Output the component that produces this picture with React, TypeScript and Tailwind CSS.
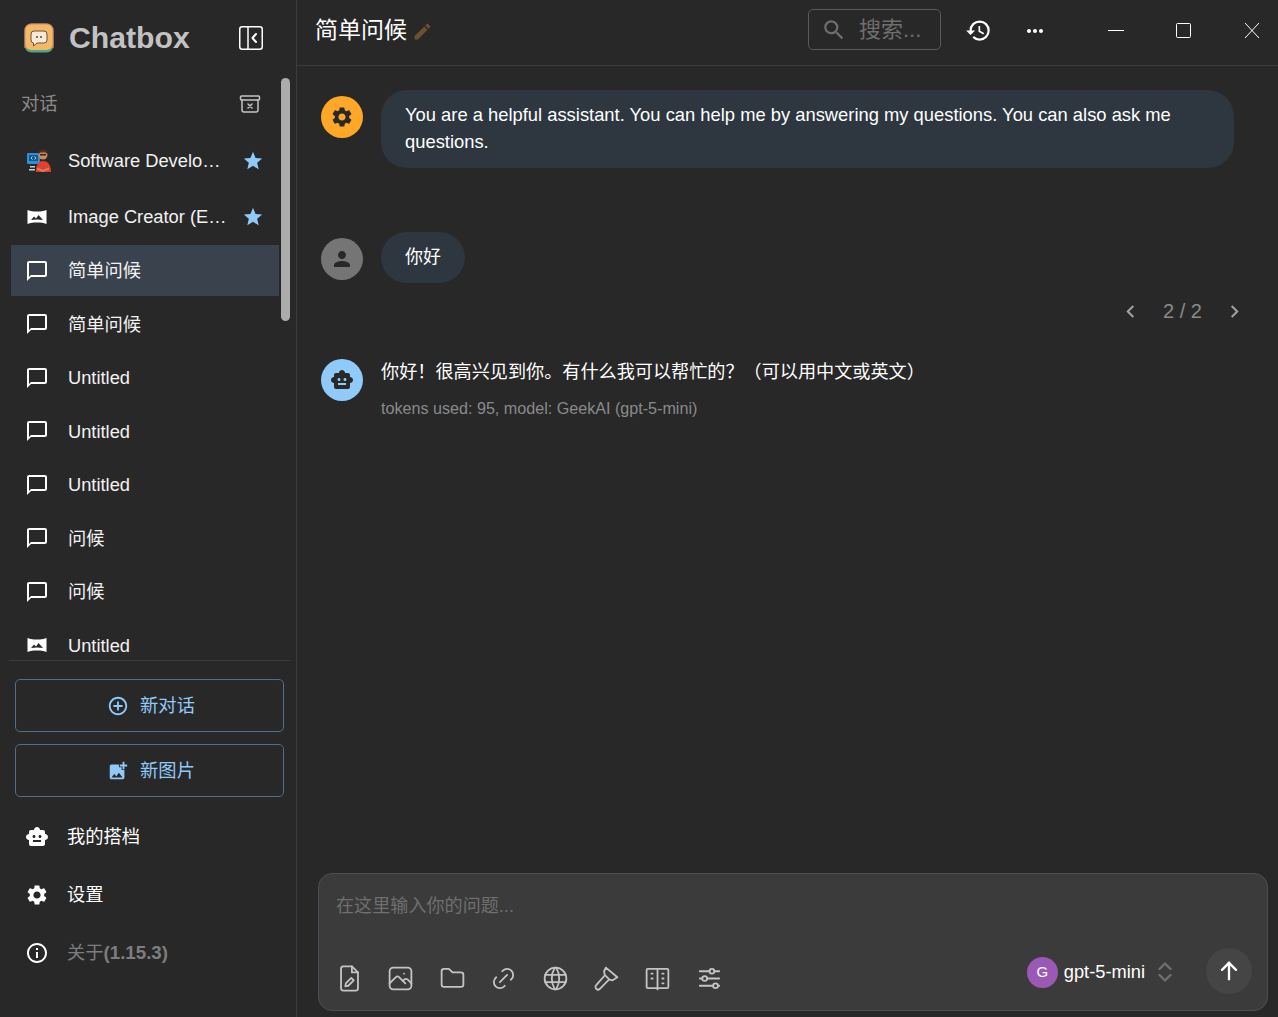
import {
  MdAddCircleOutline,
  MdAddPhotoAlternate,
  MdChatBubbleOutline,
  MdChevronLeft,
  MdChevronRight,
  MdEdit,
  MdHistory,
  MdInfoOutline,
  MdMoreHoriz,
  MdPerson,
  MdSearch,
  MdSettings,
  MdSmartToy,
  MdStar,
} from 'react-icons/md';
import { TbAdjustmentsHorizontal, TbArrowUp, TbFolder, TbLink, TbPhoto, TbWorld } from 'react-icons/tb';

const font = { fontFamily: '"Liberation Sans", "Noto Sans CJK SC", sans-serif' };

function Logo() {
  return (
    <svg viewBox="0 0 30 30" className="h-[30px] w-[30px]">
      <rect x="0.5" y="0.5" width="29" height="29" rx="7" fill="#4fa58f" />
      <path d="M7 0.5h16a6.5 6.5 0 0 1 6.5 6.5v18H0.5V7A6.5 6.5 0 0 1 7 0.5z" fill="#e2835f" />
      <rect x="1.5" y="1.5" width="27" height="25.5" rx="6" fill="#f4b967" />
      <path d="M10 8h10a3 3 0 0 1 3 3v6a3 3 0 0 1-3 3h-7l-3.5 3v-3a3 3 0 0 1-2.5-3v-6a3 3 0 0 1 3-3z" fill="#f7e9d7" stroke="#6b5240" strokeWidth="1" />
      <circle cx="13" cy="14" r="1" fill="#5a4636" />
      <circle cx="17" cy="14" r="1" fill="#5a4636" />
    </svg>
  );
}

function CollapseIcon() {
  return (
    <svg viewBox="0 0 24 24" className="h-[24px] w-[24px]" fill="none" stroke="#ffffff" strokeWidth="1.500" strokeLinecap="round" strokeLinejoin="round">
      <rect x="0.750" y="0.750" width="22.500" height="22.500" rx="2.500" />
      <path d="M9 0.750v22.500" />
      <path d="M17 8l-3.500 4 3.500 4" strokeWidth="2" />
    </svg>
  );
}

function DevAvatar() {
  return (
    <svg viewBox="0 0 26 26" className="h-[26px] w-[26px]">
      <rect x="1" y="5" width="13" height="11" rx="1" fill="#2f8fd6" />
      <rect x="3" y="7" width="9" height="6" fill="#155a8a" />
      <path d="M5 10l1.500-1.500M5 10l1.500 1.500M10 10l-1.500-1.500M10 10l-1.500 1.500" stroke="#cfe9fb" strokeWidth="0.8" />
      <rect x="4" y="18" width="5" height="1.500" fill="#cccccc" />
      <rect x="3" y="21" width="6" height="1.500" fill="#cccccc" />
      <circle cx="17" cy="7" r="4.500" fill="#c98a62" />
      <path d="M12.500 6c0-5 9-6 9 0l-2-1.500h-5z" fill="#5b2d1c" />
      <rect x="14" y="6" width="6" height="1.500" fill="#2a2a2a" />
      <path d="M10 24c0-8 3-11 7-11s8 3 8 11z" fill="#e2402f" />
      <path d="M11 19.500l6 2.500 6-2.500v2l-6 2.500-6-2.500z" fill="#c98a62" />
    </svg>
  );
}

function PanoramaIcon() {
  return (
    <svg viewBox="0 0 20 18" className="h-[18px] w-[20px]">
      <path
        d="M0.500 2c3 1.200 6 1.600 9.500 1.600S16.500 3.200 19.500 2v14c-3-1.200-6-1.600-9.500-1.600S3.500 14.800 0.500 16z"
        fill="#ffffff"
      />
      <path d="M4 12l3-3.500 2 2 2.500-3.500 4.500 5c-4-.8-8-.8-12 0z" fill="#282828" />
    </svg>
  );
}

function ClearIcon() {
  return (
    <svg viewBox="0 0 24 24" className="h-[24px] w-[24px]" fill="none" stroke="#c4c4c4" strokeWidth="1.500" strokeLinecap="round" strokeLinejoin="round">
      <rect x="2.500" y="4" width="19" height="4" rx="1" />
      <path d="M4 8v10a2 2 0 0 0 2 2h12a2 2 0 0 0 2-2V8" />
      <path d="M10 12l4 4M14 12l-4 4" />
    </svg>
  );
}

function BookIcon() {
  return (
    <svg viewBox="0 0 24 24" className="h-[29px] w-[29px]" fill="none" stroke="#c4c4c4" strokeWidth="1.500" strokeLinecap="round" strokeLinejoin="round">
      <path d="M12 20H4a1 1 0 0 1-1-1V5a1 1 0 0 1 1-1h16a1 1 0 0 1 1 1v14a1 1 0 0 1-1 1h-8zM12 4v17" />
      <path d="M7 8h1M7 12h1M16 8h1M16 12h1M16 16h1" />
    </svg>
  );
}

function FileEditIcon() {
  return (
    <svg viewBox="0 0 24 24" className="h-[29px] w-[29px]" fill="none" stroke="#c4c4c4" strokeWidth="1.500" strokeLinecap="round" strokeLinejoin="round">
      <path d="M14 2H7a2 2 0 0 0-2 2v16a2 2 0 0 0 2 2h10a2 2 0 0 0 2-2V7z" />
      <path d="M14 2v5h5" />
      <path d="M8.500 18.500l.5-2.500 4.500-4.500 2 2-4.500 4.500z" />
    </svg>
  );
}

function HammerIcon() {
  return (
    <svg viewBox="0 0 24 24" className="h-[29px] w-[29px]" fill="none" stroke="#c4c4c4" strokeWidth="1.500" strokeLinecap="round" strokeLinejoin="round">
      <path d="M11.500 3L21 11l-4 2.500-2.500-.5-4-4-.5-3z" />
      <path d="M10.500 9.500l-7 8a2 2 0 0 0 3 3l7.500-7.500" />
    </svg>
  );
}

function SelectorIcon() {
  return (
    <svg viewBox="0 0 14 24" className="h-[24px] w-[14px]" fill="none" stroke="#6f6f6f" strokeWidth="2.400" strokeLinecap="round" strokeLinejoin="round">
      <path d="M1.500 9L7 3.500 12.500 9" />
      <path d="M1.500 15L7 20.500 12.500 15" />
    </svg>
  );
}

type Session = { id: number; label: string; icon: 'chat' | 'image' | 'dev'; star?: boolean; active?: boolean; height: string };

const sessions: Session[] = [
  { id: 1, label: 'Software Developer', icon: 'dev', star: true, height: 'h-[58px]' },
  { id: 2, label: 'Image Creator (Example)', icon: 'image', star: true, height: 'h-[54px]' },
  { id: 3, label: '简单问候', icon: 'chat', active: true, height: 'h-[53.5px]' },
  { id: 4, label: '简单问候', icon: 'chat', height: 'h-[53.5px]' },
  { id: 5, label: 'Untitled', icon: 'chat', height: 'h-[53.5px]' },
  { id: 6, label: 'Untitled', icon: 'chat', height: 'h-[53.5px]' },
  { id: 7, label: 'Untitled', icon: 'chat', height: 'h-[53.5px]' },
  { id: 8, label: '问候', icon: 'chat', height: 'h-[53.5px]' },
  { id: 9, label: '问候', icon: 'chat', height: 'h-[53.5px]' },
  { id: 10, label: 'Untitled', icon: 'image', height: 'h-[53.5px]' },
];

function SessionRow({ s }: { s: Session }) {
  return (
    <div className={`flex items-center pl-[11px] pr-[11px] ${s.height}`}>
      <div className={`flex h-[51px] flex-1 items-center pl-[13px] ${s.active ? 'bg-[#39424d]' : ''}`}>
        <span className="flex w-[26px] items-center justify-center">
          {s.icon === 'chat' && <MdChatBubbleOutline className="text-[24px] text-white" />}
          {s.icon === 'image' && <PanoramaIcon />}
          {s.icon === 'dev' && (
            <span className="ml-[3px]">
              <DevAvatar />
            </span>
          )}
        </span>
        <span className="ml-[18px] w-[159px] truncate text-[18.3px] text-[#f2f2f2]">{s.label}</span>
        {s.star && <MdStar className="ml-[15px] shrink-0 text-[22px] text-[#90caf9]" />}
      </div>
    </div>
  );
}

function OutlineButton({ icon, label }: { icon: React.ReactNode; label: string }) {
  return (
    <button className="flex h-[53px] w-[269px] items-center justify-center gap-[11px] rounded-[5px] border border-[#4d6f8c] pl-[3px] text-[18.3px] text-[#90caf9]">
      {icon}
      <span>{label}</span>
    </button>
  );
}

function Sidebar() {
  return (
    <aside className="flex h-full w-[297px] shrink-0 flex-col border-r border-[#3c3c3c]">
      <div className="mb-[2px] flex h-[76px] shrink-0 items-center pl-[24px] pr-[33px]">
        <Logo />
        <span className="ml-[15px] flex-1 text-[30.2px] font-bold text-[#c2c2c2]">Chatbox</span>
        <CollapseIcon />
      </div>
      <div className="relative ml-[9px] mr-[6px] h-[583px] shrink-0 overflow-hidden border-b border-[#3c3c3c]">
        <div className="-ml-[9px]">
          <div className="flex h-[54px] items-center pb-[2px] pl-[21px] pr-[28px]">
            <span className="flex-1 text-[18.3px] text-[#8a8a8a]">对话</span>
            <ClearIcon />
          </div>
          {sessions.map((s) => (
            <SessionRow key={s.id} s={s} />
          ))}
        </div>
        <div className="absolute right-0 top-0 h-[243px] w-[9px] rounded-full bg-[#acacac]" />
      </div>
      <div className="flex flex-col gap-[12px] pl-[15px] pt-[18px]">
        <OutlineButton icon={<MdAddCircleOutline className="text-[22px]" />} label="新对话" />
        <OutlineButton icon={<MdAddPhotoAlternate className="text-[22px]" />} label="新图片" />
      </div>
      <div className="mt-[10px] flex flex-col pl-[25px] text-[18.3px]">
        <div className="flex h-[59px] items-center gap-[18px] text-white">
          <MdSmartToy className="text-[24px]" />
          <span>我的搭档</span>
        </div>
        <div className="flex h-[58px] items-center gap-[18px] text-white">
          <MdSettings className="text-[24px]" />
          <span>设置</span>
        </div>
        <div className="flex h-[58px] items-center gap-[18px] text-[#7d7d7d]">
          <MdInfoOutline className="text-[24px] text-white" />
          <span>
            关于<span className="text-[18.7px] font-bold">(1.15.3)</span>
          </span>
        </div>
      </div>
    </aside>
  );
}

function Header() {
  return (
    <header className="flex h-[66px] shrink-0 items-center border-b border-[#3c3c3c] pl-[18px]">
      <span className="-translate-y-[2px] text-[23px] leading-none text-white">简单问候</span>
      <MdEdit className="ml-[5px] -translate-y-[1px] text-[21px] text-[#6d5030]" />
      <div className="ml-auto flex h-[41px] w-[133px] -translate-y-[3px] items-center rounded-[5px] border border-[#5a5a5a] pl-[12px] text-[#6f6f6f]">
        <MdSearch className="text-[26px]" />
        <span className="ml-[12px] text-[22px]">搜索...</span>
      </div>
      <MdHistory className="ml-[24px] -translate-y-[2px] text-[27px] text-white" />
      <MdMoreHoriz className="ml-[31px] -translate-y-[2px] text-[24px] text-white" />
      <svg viewBox="0 0 153 20" className="ml-[61px] mr-[17px] h-[20px] w-[153px] -translate-y-[3px]" fill="none" stroke="#ffffff" strokeWidth="1">
        <path d="M0 10.500h16" />
        <rect x="68.500" y="3.500" width="14" height="14" rx="1" />
        <path d="M137 3l14 15M151 3l-14 15" />
      </svg>
    </header>
  );
}

function Avatar({ color, children }: { color: string; children: React.ReactNode }) {
  return <div className={`flex h-[42px] w-[42px] shrink-0 items-center justify-center rounded-full text-[24px] text-[#282828] ${color}`}>{children}</div>;
}

function Messages() {
  return (
    <div className="flex-1 overflow-hidden pl-[24px] pr-[44px] pt-[24px]">
      <div className="flex gap-[18px]">
        <div className="pt-[6px]">
          <Avatar color="bg-[#ffa726]">
            <MdSettings />
          </Avatar>
        </div>
        <div className="flex-1 rounded-[26px] bg-[#2e3640] px-[24px] pb-[13px] pt-[11px] text-[18.36px] leading-[27px] text-white">
          You are a helpful assistant. You can help me by answering my questions. You can also ask me questions.
        </div>
      </div>
      <div className="mt-[64px] flex gap-[18px]">
        <div className="pt-[6px]">
          <Avatar color="bg-[#757575]">
            <MdPerson />
          </Avatar>
        </div>
        <div className="rounded-[26px] bg-[#2e3640] px-[24px] py-[12px] text-[18px] leading-[27px] text-white">你好</div>
      </div>
      <div className="-mr-[13px] mt-[14px] flex h-[28px] items-center justify-end gap-[20px] text-[#8a8a8a]">
        <MdChevronLeft className="text-[25px] text-[#a0a0a0]" />
        <span className="text-[20px]">2 / 2</span>
        <MdChevronRight className="text-[25px] text-[#a0a0a0]" />
      </div>
      <div className="mt-[34px] flex gap-[18px]">
        <Avatar color="bg-[#90caf9]">
          <MdSmartToy />
        </Avatar>
        <div>
          <p className="text-[18.14px] leading-[27px] text-white">你好！很高兴见到你。有什么我可以帮忙的？（可以用中文或英文）</p>
          <p className="mt-[10px] text-[16.14px] leading-[24px] text-[#8a8a8a]">tokens used: 95, model: GeekAI (gpt-5-mini)</p>
        </div>
      </div>
    </div>
  );
}

function InputBox() {
  const cls = 'text-[29px] text-[#c4c4c4]';
  return (
    <div className="pb-[6px] pl-[21px] pr-[10px]">
      <div className="flex h-[138px] flex-col rounded-[14px] border border-[#4a4f57] bg-[#3b3b3b] pl-[17px] pr-[15px]">
        <div className="pt-[18.6px] text-[18.1px] leading-[27px] text-[#6f6f6f]">在这里输入你的问题...</div>
        <div className="mb-[15px] mt-auto flex h-[46px] items-center">
          <div className="-ml-[1px] flex translate-y-[6px] gap-[22.4px]">
            <FileEditIcon />
            <TbPhoto className={cls} strokeWidth={1.5} />
            <TbFolder className={cls} strokeWidth={1.5} />
            <TbLink className={cls} strokeWidth={1.5} />
            <TbWorld className={cls} strokeWidth={1.5} />
            <HammerIcon />
            <BookIcon />
            <TbAdjustmentsHorizontal className={cls} strokeWidth={1.5} />
          </div>
          <div className="ml-auto flex items-center">
            <span className="flex h-[31px] w-[31px] items-center justify-center rounded-full bg-[#9b59b6] text-[15px] text-white">G</span>
            <span className="ml-[6px] text-[18.3px] text-white">gpt-5-mini</span>
            <span className="ml-[13px] flex">
              <SelectorIcon />
            </span>
            <span className="-mt-[2px] ml-[34px] flex h-[46px] w-[46px] items-center justify-center rounded-full bg-[#454545]">
              <TbArrowUp className="text-[28px] text-white" />
            </span>
          </div>
        </div>
      </div>
    </div>
  );
}

export default function App() {
  return (
    <div className="flex h-[1017px] w-[1278px] overflow-hidden bg-[#282828]" style={font}>
      <Sidebar />
      <main className="flex h-full flex-1 flex-col">
        <Header />
        <Messages />
        <InputBox />
      </main>
    </div>
  );
}
